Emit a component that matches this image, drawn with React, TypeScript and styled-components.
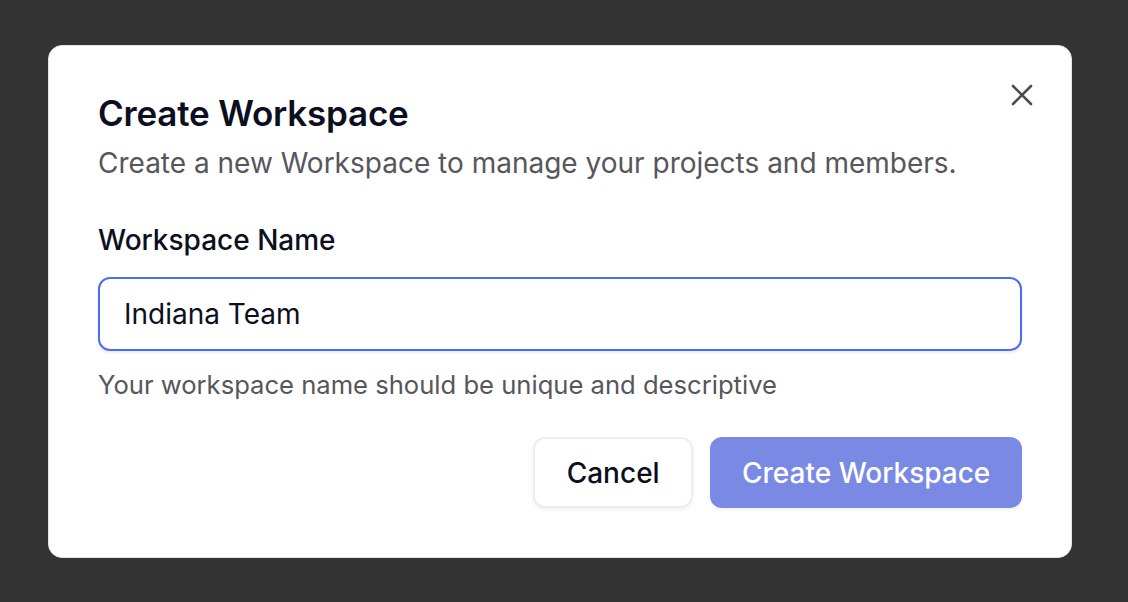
import React from "react";
import styled, { createGlobalStyle } from "styled-components";

const Global = createGlobalStyle`
  html, body { margin: 0; padding: 0; background: #333333; }
  body { font-family: Inter, "Noto Sans", sans-serif; -webkit-font-smoothing: antialiased; }
  * { box-sizing: border-box; }
`;

const Page = styled.div`
  width: 1128px;
  height: 602px;
  padding: 45px 56px 44px 48px;
  display: flex;
  align-items: flex-start;
`;

const Dialog = styled.div`
  position: relative;
  width: 1024px;
  height: 513px;
  background: #ffffff;
  border: 1px solid #e4e4e7;
  border-radius: 14px;
  padding: 46px 49px 49px 49px;
  display: flex;
  flex-direction: column;
`;

const Close = styled.button`
  position: absolute;
  top: 37px;
  right: 37px;
  width: 24px;
  height: 24px;
  padding: 0;
  border: none;
  background: transparent;
  display: flex;
  align-items: center;
  justify-content: center;
  color: #4b4b55;
`;

const Title = styled.h2`
  margin: 0;
  font-size: 35px;
  line-height: 42px;
  font-weight: 600;
  color: #0b0f1e;
  letter-spacing: -0.2px;
`;

const Subtitle = styled.p`
  margin: 12px 0 0;
  font-size: 28px;
  line-height: 34px;
  color: #56565c;
`;

const Label = styled.label`
  margin-top: 43px;
  font-size: 28px;
  line-height: 34px;
  font-weight: 500;
  color: #0b0f1e;
`;

const Input = styled.input`
  margin-top: 20px;
  width: 100%;
  height: 74px;
  border: 2px solid #4c6cf5;
  border-radius: 12px;
  padding: 0 24px;
  font-family: inherit;
  font-size: 28px;
  color: #0b0f1e;
  outline: none;
  box-shadow: 0 2px 3px rgba(0, 0, 0, 0.08);
`;

const Helper = styled.p`
  margin: 18px 0 0;
  font-size: 25.6px;
  line-height: 32px;
  color: #56565c;
`;

const Actions = styled.div`
  margin-top: auto;
  display: flex;
  justify-content: flex-end;
  gap: 17px;
`;

const Button = styled.button<{ $primary?: boolean }>`
  height: 71px;
  padding: 0 31.7px;
  border-radius: 12px;
  font-family: inherit;
  font-size: 28px;
  font-weight: 500;
  border: ${(p) => (p.$primary ? "none" : "2px solid #eeeef0")};
  background: ${(p) => (p.$primary ? "#7a8ae4" : "#ffffff")};
  color: ${(p) => (p.$primary ? "#ffffff" : "#0b0f1e")};
  box-shadow: 0 2px 4px rgba(0, 0, 0, 0.06);
`;

export default function App() {
  return (
    <>
      <Global />
      <Page>
        <Dialog>
          <Close aria-label="Close">
            <svg width="24" height="24" viewBox="0 0 24 24" fill="none" stroke="currentColor" strokeWidth="2.6" strokeLinecap="round">
              <path d="M3 3 L21 21 M21 3 L3 21" />
            </svg>
          </Close>
          <Title>Create Workspace</Title>
          <Subtitle>Create a new Workspace to manage your projects and members.</Subtitle>
          <Label>Workspace Name</Label>
          <Input defaultValue="Indiana Team" />
          <Helper>Your workspace name should be unique and descriptive</Helper>
          <Actions>
            <Button>Cancel</Button>
            <Button $primary>Create Workspace</Button>
          </Actions>
        </Dialog>
      </Page>
    </>
  );
}
